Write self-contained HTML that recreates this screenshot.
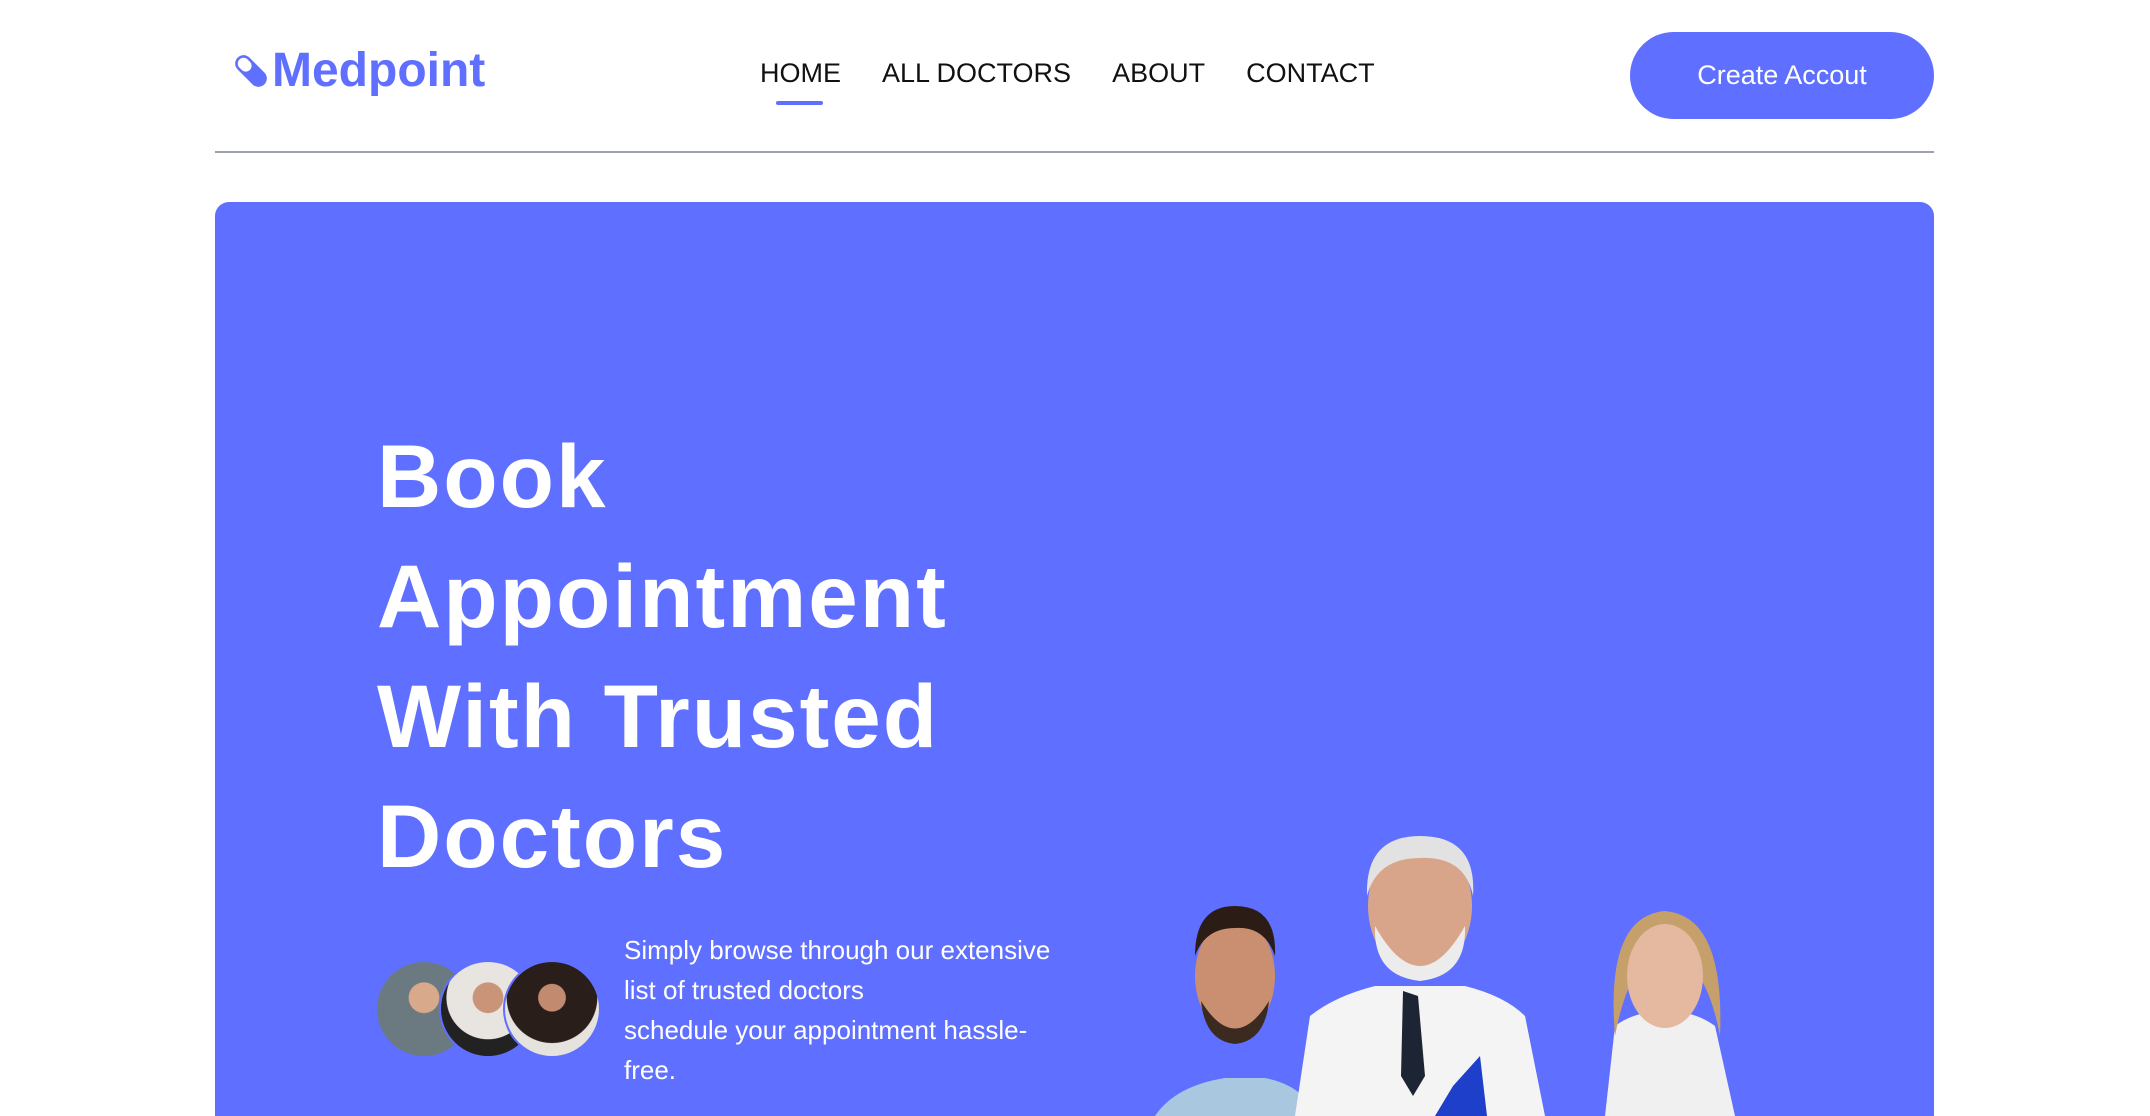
<!DOCTYPE html>
<html><head><meta charset="utf-8"><style>
*{margin:0;padding:0;box-sizing:border-box}
html,body{width:2150px;height:1116px;overflow:hidden}
body{background:#fff;font-family:"Liberation Sans",sans-serif;position:relative}
.logo{position:absolute;left:230px;top:43px;display:flex;align-items:center;color:#5f6fff;font-weight:bold;font-size:48px}
.nav{position:absolute;top:58px;left:760px;display:flex;gap:41px;font-size:27px;color:#111;font-weight:500}
.ul{position:absolute;left:776px;top:101px;width:47px;height:4px;background:#5f6fff;border-radius:2px}
.btn{position:absolute;left:1630px;top:32px;width:304px;height:87px;border-radius:44px;background:#5f6fff;color:#fff;font-size:27px;display:flex;align-items:center;justify-content:center}
.line{position:absolute;left:215px;top:151px;width:1719px;height:2px;background:#9ca3af}
.hero{position:absolute;left:215px;top:202px;width:1719px;height:914px;background:#5f6fff;border-radius:14px 14px 0 0;overflow:hidden}
h1{position:absolute;left:162px;top:214px;color:#fff;font-size:89px;line-height:120px;font-weight:bold;letter-spacing:2px}
.av{position:absolute;top:758px;width:98px;height:98px;border-radius:50%;border:2px solid #5f6fff}
p{position:absolute;left:409px;top:728px;width:520px;color:#fff;font-size:26px;line-height:40px}
</style></head><body>
<div class="logo"><svg width="42" height="42" viewBox="0 0 40 40"><g transform="rotate(-45 20 20)"><rect x="12" y="2" width="16" height="36" rx="8" fill="#5f6fff"/><rect x="14.5" y="4.5" width="11" height="14" rx="5.5" fill="#fff"/></g></svg>Medpoint</div>
<div class="nav"><span>HOME</span><span>ALL DOCTORS</span><span>ABOUT</span><span>CONTACT</span></div>
<div class="ul"></div>
<div class="btn">Create Accout</div>
<div class="line"></div>
<div class="hero">
<h1>Book<br>Appointment<br>With Trusted<br>Doctors</h1>
<div class="av" style="left:160px;background:radial-gradient(circle at 50% 38%,#d8a98a 0 20%,#6b7a80 21% 100%)"></div>
<div class="av" style="left:224px;background:radial-gradient(circle at 50% 38%,#c99478 0 20%,#e8e4e0 21% 55%,#222 56%)"></div>
<div class="av" style="left:288px;background:radial-gradient(circle at 50% 38%,#c28a6e 0 18%,#2a1e1a 19% 60%,#e6e2de 61%)"></div>
<p>Simply browse through our extensive<br>list of trusted doctors<br>schedule your appointment hassle-<br>free.</p>
<svg style="position:absolute;left:920px;top:614px" width="620" height="300" viewBox="0 0 620 300">
<path d="M20 300 Q40 270 90 262 L130 262 Q170 270 180 300Z" fill="#a9c8e0"/>
<ellipse cx="100" cy="160" rx="40" ry="58" fill="#c98f70"/>
<path d="M60 140 Q60 90 100 90 Q142 90 140 140 Q130 110 100 112 Q70 112 60 140Z" fill="#2b1d16"/>
<path d="M66 185 Q100 240 134 185 Q130 225 100 228 Q70 225 66 185Z" fill="#3a2a20"/>
<path d="M160 300 L175 200 Q200 180 240 170 L330 170 Q370 180 390 200 L410 300Z" fill="#f4f4f4"/>
<path d="M268 175 L283 180 L290 260 L278 280 L266 260Z" fill="#1d2433"/>
<ellipse cx="285" cy="90" rx="52" ry="68" fill="#d9a58a"/>
<path d="M232 80 Q230 20 285 20 Q342 20 338 80 Q330 40 285 42 Q242 42 232 80Z" fill="#e2e2e2"/>
<path d="M240 110 Q285 190 330 110 Q332 160 285 165 Q238 160 240 110Z" fill="#ececec"/>
<path d="M318 270 L345 240 L352 300 L300 300Z" fill="#1d3fc9"/>
<path d="M470 300 L480 210 Q500 195 530 195 Q560 195 580 210 L600 300Z" fill="#f0f0f0"/>
<path d="M480 220 Q470 100 530 95 Q590 100 585 220 Q570 140 530 140 Q495 140 480 220Z" fill="#c6a06b"/>
<ellipse cx="530" cy="160" rx="38" ry="52" fill="#e5b8a0"/>
</svg>
</div>
</body></html>
